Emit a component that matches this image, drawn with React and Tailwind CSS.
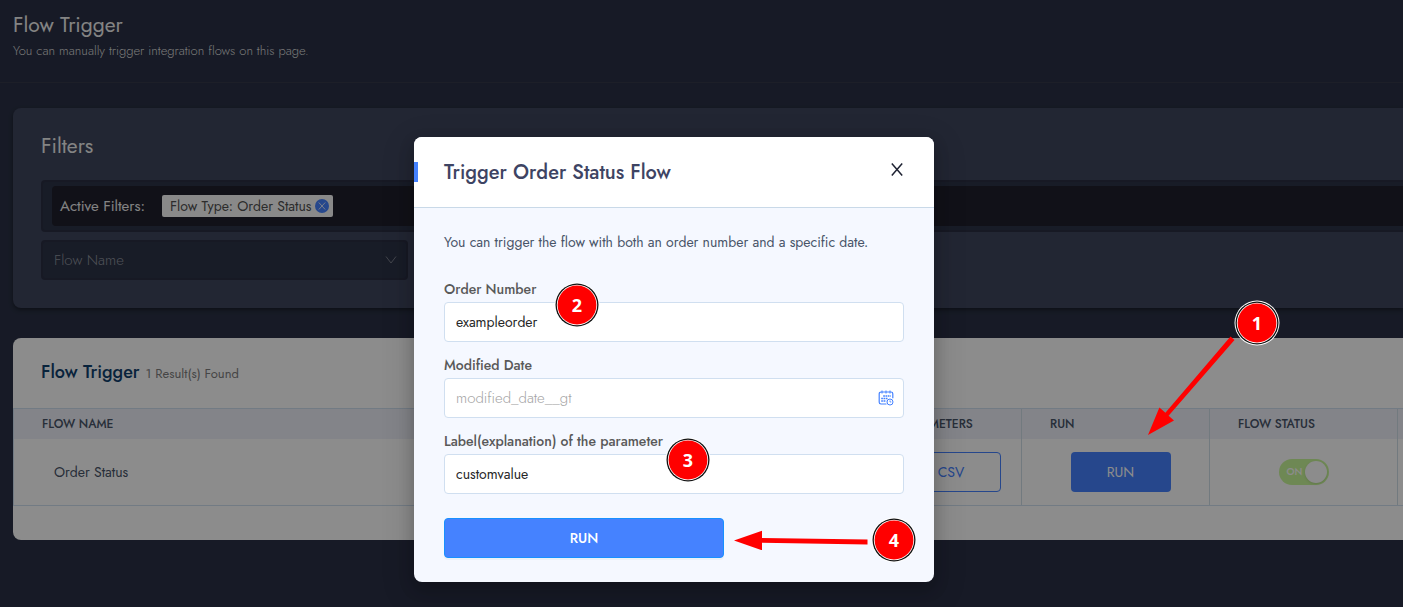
import { useState } from 'react'

const badgePos = {
  1: 'right-[124px] top-[301px]',
  2: 'left-[141px] top-[146px]',
  3: 'left-[252px] top-[301px]',
  4: 'left-[458px] top-[381px]',
}

function Badge({ n }) {
  return (
    <div className={`absolute flex size-[44px] items-center justify-center ${badgePos[n]}`}>
      <svg viewBox="0 0 44 44" className="absolute inset-0 size-full overflow-visible">
        <circle cx="22" cy="22" r="22.5" fill="#fff" />
        <circle cx="22" cy="22" r="21.5" fill="#111" />
        <circle cx="22" cy="22" r="20.2" fill="#fff" />
        <circle cx="22" cy="22" r="19.4" fill="#f00" />
      </svg>
      <span className="relative font-['Noto_Sans'] text-lg font-bold text-white">{n}</span>
    </div>
  )
}

function TextField({ id, label, value, onChange, placeholder, children }) {
  return (
    <div>
      <label htmlFor={id} className="mb-1 block text-sm leading-[18px] font-medium text-[#595959]">{label}</label>
      <div className="relative">
        <input
          id={id}
          value={value}
          onChange={e => onChange(e.target.value)}
          placeholder={placeholder}
          className="h-10 w-full rounded border border-[#d0dff0] bg-white px-[11px] text-sm text-[#262626] outline-none placeholder:text-[15px] placeholder:font-light placeholder:text-[#a4a4a4]"
        />
        {children}
      </div>
    </div>
  )
}

function CalendarIcon() {
  return (
    <svg viewBox="0 0 16 16" className="pointer-events-none absolute top-3 right-2.5 size-4" fill="none" stroke="#4582ff">
      <path d="M8.5 14H3a1.8 1.8 0 0 1-1.8-1.8V3.8A1.8 1.8 0 0 1 3 2h10a1.8 1.8 0 0 1 1.8 1.8v4.4" strokeWidth="1.2" />
      <path d="M4 .5v3M8 .5v3M12 .5v3" />
      <path d="M5.2 6h7.6M3.2 8.5h6.6M3.2 11h5" strokeWidth="1.7" strokeDasharray="1.7 .6" />
      <circle cx="12" cy="12" r="3" />
      <path d="M12 10.4V12h1.3" strokeWidth=".8" />
    </svg>
  )
}

function TriggerModal() {
  const [order, setOrder] = useState('exampleorder')
  const [date, setDate] = useState('')
  const [custom, setCustom] = useState('customvalue')

  return (
    <div role="dialog" aria-labelledby="modal-title" className="relative w-[520px] rounded-lg bg-[#f5f8ff] shadow-[0_6px_16px_rgba(0,0,0,0.2),0_9px_28px_8px_rgba(0,0,0,0.1)]">
      <div className="flex h-[71px] items-center rounded-t-lg border-b border-[#c9d9e8] bg-white pr-[30px]">
        <span className="h-5 w-1 bg-[#4582ff]" />
        <h2 id="modal-title" className="ml-[26px] flex-1 pt-0.5 text-xl font-medium text-[#3e4463]">Trigger Order Status Flow</h2>
        <button aria-label="Close" className="flex h-5 w-3.5 items-start justify-center pt-px">
          <svg viewBox="0 0 12 13" className="h-[13px] w-3" fill="none" stroke="#1f2333" strokeWidth="1.5">
            <path d="M.8 .5l10.400 12M11.200 .5l-10.400 12" />
          </svg>
        </button>
      </div>

      <div className="px-[30px] py-6">
        <p className="text-sm leading-5 text-[#485468]">You can trigger the flow with both an order number and a specific date.</p>
        <form className="mt-7 flex flex-col gap-3.5" onSubmit={e => e.preventDefault()}>
          <TextField id="order" label="Order Number" value={order} onChange={setOrder} />
          <TextField id="date" label="Modified Date" value={date} onChange={setDate} placeholder="modified_date__gt">
            <CalendarIcon />
          </TextField>
          <TextField id="custom" label="Label(explanation) of the parameter" value={custom} onChange={setCustom} />
          <button type="submit" className="mt-2.5 h-10 w-[280px] rounded border border-[#1890ff] bg-[#4582ff] text-sm font-medium text-white shadow-[0_2px_0_rgba(0,0,0,0.03)]">
            RUN
          </button>
        </form>
      </div>

      <Badge n={2} />
      <Badge n={3} />
      <Badge n={4} />
      {/* Arrow to the submit button */}
      <svg viewBox="0 0 134 20" className="absolute top-[393px] left-[320px] h-5 w-[134px]">
        <path d="M0 10.5L28 .8v7.2L133.500 9.500v5L28 12.700v7.600z" fill="#f00" />
      </svg>
    </div>
  )
}

export default function App() {
  const [on, setOn] = useState(true)

  return (
    <div className="relative min-h-screen overflow-hidden bg-[#2a3145] font-[Jost,Lato,sans-serif]">
      <header className="border-b border-[#353949] px-[13px] pt-[11px] pb-[22px]">
        <h1 className="text-[21px] leading-7 text-[#f0f0f0]">Flow Trigger</h1>
        <p className="mt-[3px] text-[13px] leading-[18px] font-light text-[#dcdcdc]">You can manually trigger integration flows on this page.</p>
      </header>

      <main className="flex flex-col gap-[30px] pt-[25px] pl-[13px]">
        {/* Filters */}
        <section className="rounded-l-lg bg-[#3e455d] pt-6 pb-7 pl-7 shadow-[0_2px_4px_rgba(0,0,0,0.4)]">
          <h2 className="text-[21px] leading-7 text-[#f0f0f0]">Filters</h2>
          <div className="mt-5 rounded-l border-2 border-r-0 border-[#2b2f43] bg-[#2c3347] py-1 pl-[9px]">
            <div className="flex h-10 items-center rounded-l bg-[#1f1f2c] pl-2">
              <span className="text-[15px] text-[#f0f0f0]">Active Filters:</span>
              <span className="ml-[17px] flex h-[22px] items-center gap-1 rounded-xs bg-[#fafafa] pr-1 pl-2 text-sm text-[#505050]">
                Flow Type: Order Status
                <button aria-label="Remove filter" className="flex size-3.5 items-center justify-center rounded-full bg-[#4582ff]">
                  <svg viewBox="0 0 14 14" className="size-3.5" fill="none" stroke="#dbe6ff">
                    <path d="M3.800 3.500l6.400 7M10.200 3.500l-6.400 7" />
                  </svg>
                </button>
              </span>
            </div>
          </div>
          <div className="relative mt-2 w-[367px]">
            <select aria-label="Flow Name" className="h-10 w-full appearance-none rounded border-2 border-[#2b2f43] bg-[#2c3347] px-[11px] text-[15px] font-light text-[#90949f] outline-none">
              <option>Flow Name</option>
            </select>
            <svg viewBox="0 0 12 12" className="pointer-events-none absolute top-3.5 right-[11px] size-3" fill="none" stroke="#7b7f8c">
              <path d="M1 2.500l5 6.500 5-6.500" />
            </svg>
          </div>
        </section>

        {/* Results */}
        <section className="rounded-l-lg bg-white pb-[34px]">
          <div className="flex h-[70px] items-baseline gap-1.5 pt-5 pl-7">
            <h2 className="text-lg leading-7 font-medium text-[#0f406d]">Flow Trigger</h2>
            <span className="text-[13px] text-[#808080]">1 Result(s) Found</span>
          </div>
          <table className="w-full table-fixed border-separate border-spacing-0 border-y border-l border-[#d0e0f0]">
            <thead>
              <tr className="h-[30px] bg-[#eef0f9] text-left text-xs text-[#485468]">
                <th className="pl-7 font-medium">FLOW NAME</th>
                <th className="w-[151px] border-r border-[#d0dfe8] pl-7 font-medium">PARAMETERS</th>
                <th className="w-[188px] border-r border-[#d0dfe8] pl-7 font-medium">RUN</th>
                <th className="w-[188px] border-r border-[#d0dfe8] pl-7 font-medium">FLOW STATUS</th>
                <th className="w-[5px]"></th>
              </tr>
            </thead>
            <tbody>
              <tr className="h-[66px] text-sm text-[#485468]">
                <td className="pl-10">Order Status</td>
                <td className="border-r border-[#d0dfe8] pl-2.5 text-center">
                  <button className="h-10 w-[100px] rounded border border-[#4582ff] text-[#4582ff]">CSV</button>
                </td>
                <td className="border-r border-[#d0dfe8] pl-2.5 text-center">
                  <button className="h-10 w-[100px] rounded bg-[#4582ff] text-white">RUN</button>
                </td>
                <td className="border-r border-[#d0dfe8]">
                  <label className="mx-auto flex h-[26px] w-[50px] cursor-pointer items-center justify-between rounded-full bg-[#c9f79a] pr-0.5 pl-2">
                    <input type="checkbox" checked={on} onChange={() => setOn(!on)} className="sr-only" />
                    <span className="text-[10px] font-medium text-white">{on ? 'ON' : 'OFF'}</span>
                    <span className="size-[22px] rounded-full bg-white shadow-sm" />
                  </label>
                </td>
                <td></td>
              </tr>
            </tbody>
          </table>
        </section>
      </main>

      {/* Mask + modal */}
      <div className="absolute inset-0 flex items-start justify-center bg-black/45 pt-[137px] pr-[55px]">
        <TriggerModal />
      </div>

      {/* Arrow to the run column */}
      <svg viewBox="0 0 90 102" className="absolute top-[335px] right-[166px] h-[102px] w-[90px]">
        <path d="M1 100L12.400 72.500l6 5.200L83.500 1.500l4 3.400L21.600 80.800l5.400 4.800z" fill="#f00" />
      </svg>
      <Badge n={1} />
    </div>
  )
}
